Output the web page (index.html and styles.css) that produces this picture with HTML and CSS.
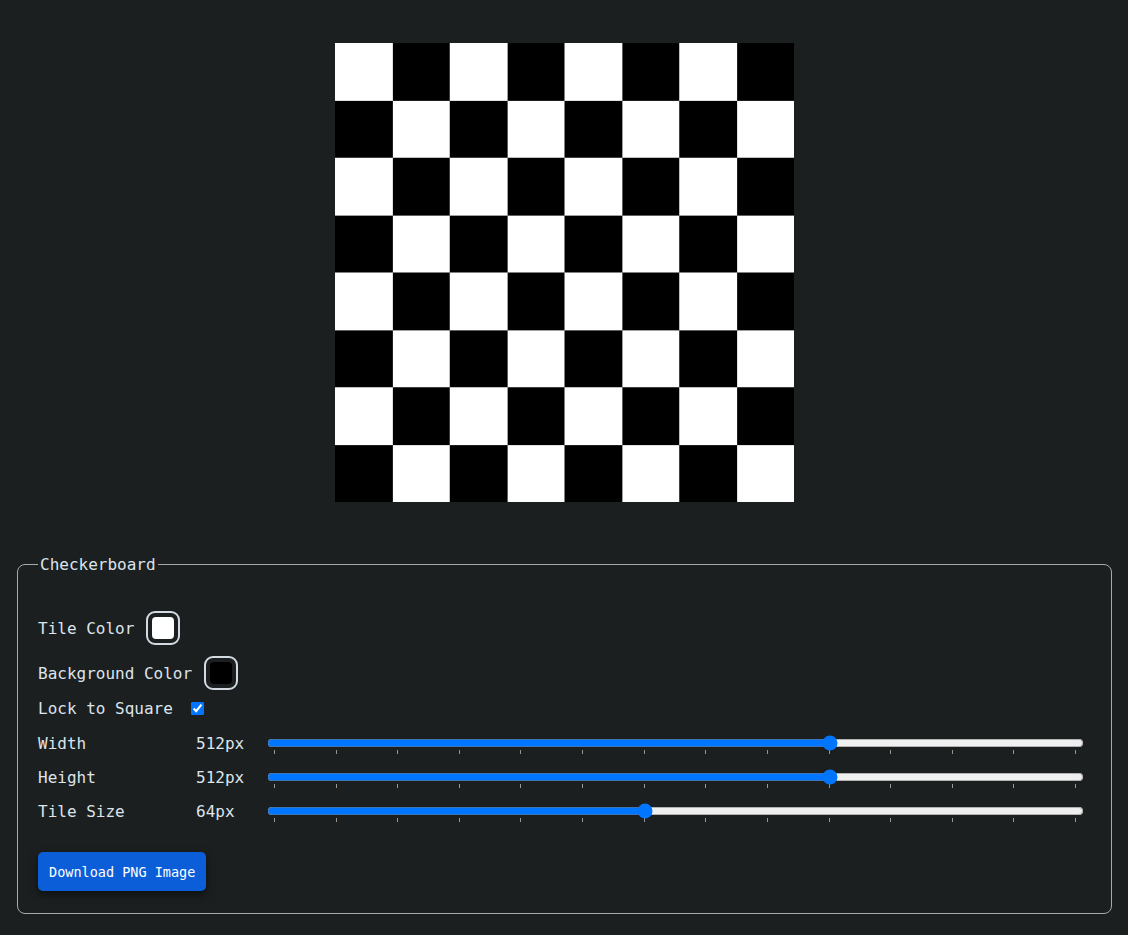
FILE: index.html
```html
<!DOCTYPE html>
<html lang="en">
<head>
<meta charset="utf-8">
<title>Checkerboard</title>
<link rel="stylesheet" href="styles.css">
</head>
<body>
<main class="app">
  <div class="preview">
    <div class="board" role="img" aria-label="Checkerboard preview"></div>
  </div>
  <fieldset class="panel">
    <legend class="panel-title">Checkerboard</legend>
    <div class="row row-color first">
      <span class="label">Tile Color</span>
      <span class="swatch"><span class="swatch-fill fill-white"></span></span>
    </div>
    <div class="row row-color second">
      <span class="label">Background Color</span>
      <span class="swatch"><span class="swatch-fill fill-black"></span></span>
    </div>
    <div class="row lock-row">
      <label class="label" for="lock">Lock to Square</label>
      <input class="check" type="checkbox" id="lock" checked>
    </div>
    <div class="row slider-row">
      <span class="label name">Width</span>
      <span class="value">512px</span>
      <input class="range" type="range" min="0" max="13" value="9" list="ticks">
    </div>
    <div class="row slider-row">
      <span class="label name">Height</span>
      <span class="value">512px</span>
      <input class="range" type="range" min="0" max="13" value="9" list="ticks">
    </div>
    <div class="row slider-row">
      <span class="label name">Tile Size</span>
      <span class="value">64px</span>
      <input class="range" type="range" min="0" max="13" value="6" list="ticks">
    </div>
    <datalist id="ticks">
      <option value="0"></option><option value="1"></option><option value="2"></option>
      <option value="3"></option><option value="4"></option><option value="5"></option>
      <option value="6"></option><option value="7"></option><option value="8"></option>
      <option value="9"></option><option value="10"></option><option value="11"></option>
      <option value="12"></option><option value="13"></option>
    </datalist>
    <div class="actions">
      <button class="btn" type="button">Download PNG Image</button>
    </div>
  </fieldset>
</main>
</body>
</html>
```

FILE: styles.css
```css
html, body {
  margin: 0;
  padding: 0;
  background: #1b1f20;
}
body {
  color: #dde4ec;
  font-family: "DejaVu Sans Mono", "Liberation Mono", monospace;
  font-size: 16px;
}
.app {
  padding: 43px 16px 0 17px;
}
.preview {
  display: flex;
  justify-content: center;
}
.board {
  width: 459px;
  height: 459px;
  background-color: #fff;
  background-image: conic-gradient(#000 0 25%, #fff 0 50%, #000 0 75%, #fff 0);
  background-size: 114.75px 114.75px;
}
.panel {
  margin: 53px 0 0 0;
  border: 1.5px solid #a9a9a9;
  border-radius: 8px;
  padding: 37px 27px 22px 20px;
  min-width: 0;
}
.panel-title {
  padding: 0 2px;
  margin-left: 0;
  line-height: 19px;
}
.row {
  display: flex;
  align-items: center;
  height: 34px;
  gap: 12px;
}
.row.first { margin-bottom: 11px; }
.row.second { margin-bottom: 1px; }
.lock-row { margin-bottom: 1px; }
.label { white-space: pre; }
.swatch {
  box-sizing: border-box;
  width: 34px;
  height: 34px;
  border: 2px solid #d3dae2;
  border-radius: 9px;
  padding: 4px;
  display: flex;
}
.swatch-fill {
  flex: 1;
  border-radius: 4px;
}
.fill-white { background: #fff; }
.fill-black { background: #000; }
.check {
  width: 13px;
  height: 13px;
  margin: 0 0 0 6px;
}
.slider-row { gap: 0; }
.name { width: 158px; }
.value { width: 71px; }
.range {
  flex: 1;
  margin: 0;
  min-width: 0;
}
.actions {
  margin-top: 24px;
  display: flex;
}
.btn {
  font-family: "DejaVu Sans Mono", "Liberation Mono", monospace;
  font-size: 13.5px;
  color: #fff;
  background: #0b5ed7;
  border: 0;
  border-radius: 5px;
  height: 39px;
  padding: 0 11px;
  box-shadow: 0 3px 8px rgba(0, 0, 0, 0.55);
}
```
